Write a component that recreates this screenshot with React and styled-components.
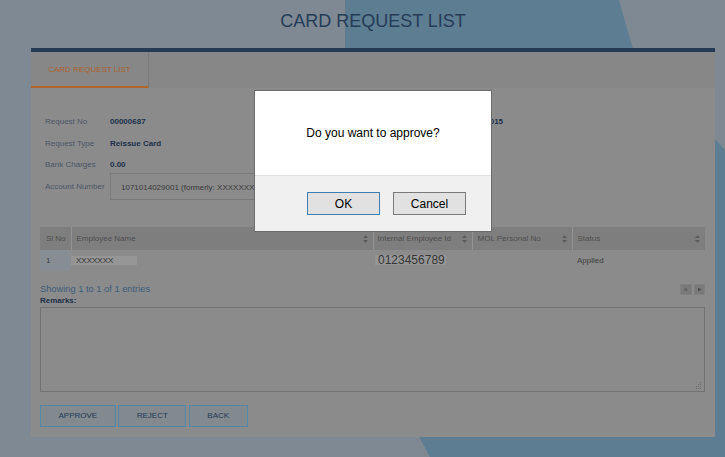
import React from "react";
import styled, { createGlobalStyle } from "styled-components";

const Global = createGlobalStyle`
  html, body { margin: 0; padding: 0; }
  body {
    background: #7e8993;
    font-family: "Liberation Sans", Arial, sans-serif;
    overflow: hidden;
  }
  * { box-sizing: border-box; }
`;

const Page = styled.div`
  position: relative;
  width: 725px;
  height: 457px;
  overflow: hidden;
  background: #7e8993;

  &::before {
    content: "";
    position: absolute;
    inset: 0;
    background: #5d7d93;
    clip-path: polygon(345px 0, 619px 0, 626px 25px, 634px 52px, 725px 150px, 725px 457px, 430px 457px, 345px 300px);
  }
`;

const Content = styled.div`
  position: relative;
  display: flex;
  flex-direction: column;
  padding: 0 10px 0 31px;
`;

const Header = styled.header`
  height: 48px;
  padding-top: 11.5px;
  display: flex;
  justify-content: center;
`;

const Title = styled.h1`
  margin: 0;
  font-size: 18px;
  line-height: 18px;
  font-weight: normal;
  color: #253c57;
`;

const Panel = styled.section`
  height: 389px;
  background: #8b8b8b;
  border-top: 4px solid #243b56;
  display: flex;
  flex-direction: column;
`;

const TabBar = styled.nav`
  height: 36px;
  background: #878787;
  display: flex;
`;

const Tab = styled.div`
  width: 118px;
  display: flex;
  align-items: center;
  justify-content: center;
  font-size: 8px;
  color: #ad622c;
  border-right: 1px solid #7b7b7b;
  border-bottom: 2px solid ${(p) => (p.$active ? "#b0652d" : "transparent")};
`;

const Body = styled.div`
  flex: 1;
  display: flex;
  flex-direction: column;
  padding: 0 10px 10px 9px;
`;

const Form = styled.div`
  margin-top: 23px;
  padding-left: 5px;
  display: grid;
  grid-template-columns: 340px 1fr;
`;

const FieldCol = styled.div`
  display: flex;
  flex-direction: column;
`;

const FieldRow = styled.div`
  display: grid;
  grid-template-columns: ${(p) => p.$labelWidth || "65px"} auto;
  align-items: ${(p) => (p.$top ? "start" : "center")};
  min-height: 21.5px;
  font-size: 8px;
  margin-top: ${(p) => p.$shift || "0"};
`;

const Label = styled.span`
  color: #4b5665;
  padding-top: ${(p) => p.$pad || "0"};
`;

const Value = styled.span`
  color: #1e3049;
  font-weight: bold;
`;

const InputBox = styled.div`
  width: 230px;
  height: 27.5px;
  border: 1px solid #7a7a7a;
  display: flex;
  align-items: center;
  padding: 2px 0 0 10px;
  font-size: 8px;
  color: #3a3a3a;
  white-space: nowrap;
  overflow: hidden;
`;

const Table = styled.table`
  margin-top: 27px;
  width: 665px;
  border-collapse: collapse;
  table-layout: fixed;
  font-size: 8px;
`;

const Col = styled.col`
  width: ${(p) => p.$w}px;
`;

const Th = styled.th`
  height: 23px;
  background: #7e7e7e;
  color: #4f4f4f;
  font-weight: normal;
  text-align: left;
  white-space: nowrap;
  padding: 0 0 0 ${(p) => p.$pad || "5px"};
  border-left: ${(p) => (p.$first ? "none" : "1px solid #939393")};
`;

const ThInner = styled.div`
  display: flex;
  align-items: center;
  justify-content: space-between;
  padding-right: 5px;
`;

const Td = styled.td`
  height: 20.5px;
  padding: 0 0 0 ${(p) => p.$pad || "5px"};
  color: #3c3c3c;
  font-weight: normal;
  background: ${(p) => p.$bg || "transparent"};
`;

const Masked = styled.span`
  display: inline-block;
  width: 66px;
  height: 9px;
  line-height: 9px;
  padding-left: 5px;
  background: #969696;
  color: #353535;
`;

const IdValue = styled.span`
  display: inline-block;
  margin-left: 2px;
  height: 10px;
  line-height: 10px;
  padding: 0 1px 0 3px;
  background: #959595;
  font-size: 12px;
  color: #353535;
`;

const InfoRow = styled.div`
  margin-top: 13px;
  height: 11px;
  display: flex;
  align-items: center;
  justify-content: space-between;
`;

const Info = styled.span`
  font-size: 9.3px;
  color: #3e5d77;
`;

const Pager = styled.div`
  display: flex;
  gap: 2px;
`;

const PageBtn = styled.div`
  width: 11.5px;
  height: 11px;
  background: #7a7a7a;
  border: 1px solid #808080;
  display: flex;
  align-items: center;
  justify-content: center;
`;

const RemarksLabel = styled.label`
  margin-top: 1.5px;
  font-size: 8px;
  line-height: 10px;
  font-weight: bold;
  color: #1f3048;
`;

const AreaWrap = styled.div`
  position: relative;
  margin-top: 1px;
`;

const Area = styled.textarea`
  display: block;
  width: 665px;
  height: 85px;
  background: #8b8b8b;
  border: 1px solid #727272;
  resize: none;
  outline: none;
`;

const Grip = styled.svg`
  position: absolute;
  right: 3px;
  bottom: 3px;
`;

const Actions = styled.div`
  margin-top: 13px;
  display: flex;
  gap: 2.5px;
`;

const ActionBtn = styled.button`
  height: 21.5px;
  padding: 0 17.5px;
  background: #82898f;
  border: 1px solid #5089aa;
  color: #1f3a56;
  font-family: "Liberation Sans", Arial, sans-serif;
  font-size: 8px;
`;

const Dialog = styled.div`
  position: absolute;
  left: 254px;
  top: 90px;
  width: 238px;
  height: 142px;
  border: 1px solid #6c6c6c;
  display: flex;
  flex-direction: column;
  background: #f0f0f0;
`;

const DialogBody = styled.div`
  height: 84px;
  background: #ffffff;
  display: flex;
  align-items: center;
  justify-content: center;
  font-size: 12px;
  color: #000;
`;

const DialogFooter = styled.div`
  flex: 1;
  border-top: 1px solid #dfdfdf;
  display: flex;
  align-items: center;
  justify-content: flex-end;
  gap: 13px;
  padding-right: 25px;
`;

const DialogBtn = styled.button`
  width: 73px;
  height: 23px;
  background: #e1e1e1;
  border: 1px solid ${(p) => (p.$focused ? "#3d7fb4" : "#7a7a7a")};
  font-family: "Liberation Sans", Arial, sans-serif;
  font-size: 12px;
  color: #000;
  padding: 0;
`;

const SortIcon = () => (
  <svg width="5" height="8" viewBox="0 0 5 8">
    <path d="M2.5 0 L5 3 L0 3 Z" fill="#5c5c5c" />
    <path d="M2.5 8 L5 5 L0 5 Z" fill="#5c5c5c" />
  </svg>
);

const columns = [
  { key: "sl", title: "Sl No", width: 31, sort: false, pad: "6px" },
  { key: "name", title: "Employee Name", width: 302, sort: true },
  { key: "id", title: "Internal Employee Id", width: 99, sort: true, pad: "4px" },
  { key: "mol", title: "MOL Personal No", width: 100, sort: true },
  { key: "status", title: "Status", width: 133, sort: true },
];

const gripDots = [
  [5, 0], [3, 2], [5, 2], [1, 4], [3, 4], [5, 4], [1, 6], [3, 6], [5, 6],
];

export default function App() {
  return (
    <Page>
      <Global />
      <Content>
        <Header>
          <Title>CARD REQUEST LIST</Title>
        </Header>
        <Panel>
          <TabBar>
            <Tab $active>CARD REQUEST LIST</Tab>
          </TabBar>
          <Body>
            <Form>
              <FieldCol>
                <FieldRow>
                  <Label>Request No</Label>
                  <Value>00000687</Value>
                </FieldRow>
                <FieldRow>
                  <Label>Request Type</Label>
                  <Value>Reissue Card</Value>
                </FieldRow>
                <FieldRow>
                  <Label>Bank Charges</Label>
                  <Value>0.00</Value>
                </FieldRow>
                <FieldRow $top $shift="-3px">
                  <Label $pad="9.5px">Account Number</Label>
                  <InputBox>1071014029001 (formerly: XXXXXXXXXXXX)</InputBox>
                </FieldRow>
              </FieldCol>
              <FieldCol>
                <FieldRow $labelWidth="78px">
                  <Label>Request Date</Label>
                  <Value>12/10/2015</Value>
                </FieldRow>
              </FieldCol>
            </Form>

            <Table>
              <colgroup>
                {columns.map((c) => (
                  <Col key={c.key} $w={c.width} />
                ))}
              </colgroup>
              <thead>
                <tr>
                  {columns.map((c, i) => (
                    <Th key={c.key} $first={i === 0} $pad={c.pad}>
                      <ThInner>
                        <span>{c.title}</span>
                        {c.sort && <SortIcon />}
                      </ThInner>
                    </Th>
                  ))}
                </tr>
              </thead>
              <tbody>
                <tr>
                  <Td $pad="6px" $bg="#888d94">1</Td>
                  <Td $pad="0">
                    <Masked>XXXXXXX</Masked>
                  </Td>
                  <Td $pad="0">
                    <IdValue>0123456789</IdValue>
                  </Td>
                  <Td></Td>
                  <Td>Applied</Td>
                </tr>
              </tbody>
            </Table>

            <InfoRow>
              <Info>Showing 1 to 1 of 1 entries</Info>
              <Pager>
                <PageBtn>
                  <svg width="5" height="5" viewBox="0 0 5 5">
                    <path d="M4 0.5 L0.5 2.5 L4 4.5 Z" fill="#5e5e5e" />
                  </svg>
                </PageBtn>
                <PageBtn>
                  <svg width="5" height="5" viewBox="0 0 5 5">
                    <path d="M1 0.5 L4.5 2.5 L1 4.5 Z" fill="#4e4e4e" />
                  </svg>
                </PageBtn>
              </Pager>
            </InfoRow>

            <RemarksLabel>Remarks:</RemarksLabel>
            <AreaWrap>
              <Area />
              <Grip width="7" height="7" viewBox="0 0 7 7">
                {gripDots.map(([x, y]) => (
                  <rect key={`${x}-${y}`} x={x} y={y} width="1" height="1" fill="#6a6a6a" />
                ))}
              </Grip>
            </AreaWrap>

            <Actions>
              <ActionBtn>APPROVE</ActionBtn>
              <ActionBtn>REJECT</ActionBtn>
              <ActionBtn>BACK</ActionBtn>
            </Actions>
          </Body>
        </Panel>
      </Content>

      <Dialog>
        <DialogBody>Do you want to approve?</DialogBody>
        <DialogFooter>
          <DialogBtn $focused>OK</DialogBtn>
          <DialogBtn>Cancel</DialogBtn>
        </DialogFooter>
      </Dialog>
    </Page>
  );
}
